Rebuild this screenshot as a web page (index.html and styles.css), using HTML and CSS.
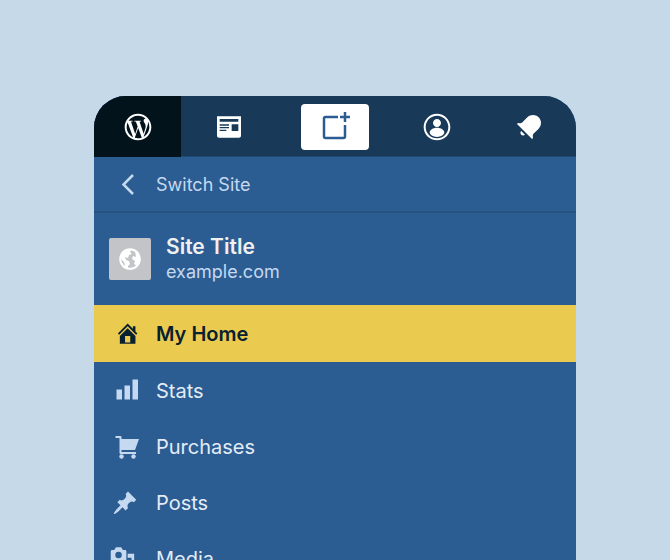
FILE: index.html
```html
<!DOCTYPE html>
<html lang="en">
<head>
<meta charset="utf-8">
<meta name="viewport" content="width=device-width, initial-scale=1">
<title>My Home</title>
<link rel="stylesheet" href="styles.css">
</head>
<body>
<div class="panel">
  <header class="topbar">
    <a class="tab tab-active" href="#sites" aria-label="My Sites"><svg class="icon-lg" viewBox="0 0 24 24"><path d="M12 2C6.477 2 2 6.477 2 12s4.477 10 10 10 10-4.477 10-10S17.523 2 12 2zM3.5 12c0-1.232.264-2.402.736-3.46L8.29 19.65C5.456 18.272 3.5 15.365 3.5 12zm8.5 8.5c-.834 0-1.64-.12-2.4-.345l2.55-7.41 2.613 7.157c.017.042.038.08.06.117-.884.31-1.833.48-2.823.48zm1.172-12.485c.512-.027.973-.08.973-.08.458-.055.404-.728-.054-.702 0 0-1.376.108-2.265.108-.835 0-2.24-.107-2.24-.107-.458-.026-.51.674-.053.7 0 0 .434.055.892.082l1.324 3.63-1.86 5.578-3.096-9.208c.512-.027.973-.08.973-.08.458-.055.403-.728-.055-.702 0 0-1.376.108-2.265.108-.16 0-.347-.003-.547-.01C6.418 5.025 9.03 3.5 12 3.5c2.213 0 4.228.846 5.74 2.232-.037-.002-.072-.007-.11-.007-.835 0-1.427.727-1.427 1.51 0 .7.404 1.292.835 1.993.323.566.7 1.293.7 2.344 0 .727-.28 1.572-.646 2.748l-.848 2.833-3.072-9.138zm3.1 11.332l2.597-7.506c.484-1.212.645-2.18.645-3.044 0-.313-.02-.603-.057-.874.664 1.21 1.042 2.6 1.042 4.078 0 3.136-1.7 5.874-4.227 7.347z"/></svg></a>
    <a class="tab" href="#reader" aria-label="Reader"><svg class="icon-lg" viewBox="0 0 24 24"><path d="M3 4v14.500c0 .8.7 1.500 1.500 1.500h15c.8 0 1.500-.7 1.500-1.500V4H3zm7 11H5v-1h5v1zm2-2H5v-1h7v1zm0-2H5v-1h7v1zm7 4h-5v-5h5v5zm0-7H5V6h14v2z"/></svg></a>
    <div class="tab"><button class="create" type="button" aria-label="Write"><svg class="icon-lg" viewBox="0 0 32 32"><path d="M19 6H6.500Q5 6 5 7.500V25.500Q5 27 6.500 27H24.500Q26 27 26 25.500V14" fill="none" stroke="currentColor" stroke-width="2.500"/><path d="M26 1V11M21 6H31" stroke="currentColor" stroke-width="2.500"/></svg></button></div>
    <a class="tab" href="#me" aria-label="My Profile"><svg class="icon-lg" viewBox="0 0 24 24"><path d="M12 2C6.477 2 2 6.477 2 12s4.477 10 10 10 10-4.477 10-10S17.523 2 12 2zm0 18.500c-4.694 0-8.500-3.806-8.500-8.500S7.306 3.500 12 3.500s8.500 3.806 8.500 8.500-3.806 8.500-8.500 8.500zm0-8c-3.038 0-5.500 1.728-5.500 3.500s2.462 3.500 5.500 3.500 5.500-1.728 5.500-3.500-2.462-3.500-5.500-3.500zm0-.5c1.660 0 3-1.340 3-3s-1.340-3-3-3-3 1.340-3 3 1.340 3 3 3z"/></svg></a>
    <a class="tab" href="#notifications" aria-label="Notifications"><svg class="icon-lg" viewBox="0 0 24 24"><path d="M6.140 14.970l2.828 2.827c-.362.362-.862.586-1.414.586-1.105 0-2-.895-2-2 0-.552.224-1.052.586-1.414zm8.867 5.324L14.300 21 3 9.700l.706-.707 1.102.157c.754.108 1.690-.122 2.077-.51l3.885-3.884c2.340-2.340 6.135-2.340 8.475 0s2.340 6.135 0 8.475l-3.885 3.886c-.388.388-.618 1.323-.51 2.077l.157 1.100z"/></svg></a>
  </header>
  <a class="switch" href="#switch"><svg class="icon" viewBox="0 0 26 26"><path d="M19 4L9.500 13.500l9.500 9.500" fill="none" stroke="currentColor" stroke-width="2.500"/></svg><span>Switch Site</span></a>
  <a class="site" href="#site">
    <span class="site-icon"><svg viewBox="0 0 22 22"><circle cx="11" cy="11" r="9.800" fill="none" stroke="currentColor" stroke-width="2"/><path d="M2 7L7 2l6-1-2 3 2 2-3 1-1 3-3-1 1 3 3 1 1 3-2 2v3l-3-2-1-5-3-3zM16 3l4 4 1 6-3 5-3-2 1-3-3-2 1-3 3 1z"/></svg></span>
    <span class="site-text"><strong class="site-title">Site Title</strong><span class="site-domain">example.com</span></span>
  </a>
  <nav class="menu">
    <a class="item item-current" href="#home" aria-current="page"><svg class="icon" viewBox="-0.500 0.500 20 20"><path d="M16 8.500l1.530 1.530-1.060 1.060L10 4.600l-6.470 6.490-1.060-1.060L10 2.500l4 4v-2h2v4zm-6-2.460l6 5.990V18H4v-5.970zM12 17v-5H8v5h4z"/></svg><span>My Home</span></a>
    <a class="item" href="#stats"><svg class="icon" viewBox="0 0 26 26"><path d="M2.500 11.500h5.500v10H2.500zM10.500 7.500h5.500v14h-5.500zM18.500 1.500h5.500v20h-5.500z"/></svg><span>Stats</span></a>
    <a class="item" href="#purchases"><svg class="icon" viewBox="0 0 26 26"><path d="M1.500 2h5q1 0 1 1v2h17.500l-4 11H7.500v2h14.500v2H6.500q-1 0-1-1V4h-4z"/><circle cx="7.500" cy="22.500" r="2.200"/><circle cx="19.500" cy="22.500" r="2.200"/></svg><span>Purchases</span></a>
    <a class="item" href="#posts"><svg class="icon" viewBox="1.500 0 20 20"><path d="M10.440 3.020l1.820-1.820 6.360 6.350-1.830 1.820c-1.050-.68-2.480-.57-3.410.36l-.75.75c-.92.93-1.040 2.350-.35 3.410l-1.830 1.820-2.410-2.410-2.800 2.790c-.42.42-3.380 2.710-3.800 2.290s1.860-3.390 2.280-3.810l2.790-2.790L4.100 9.360l1.830-1.820c1.050.69 2.480.57 3.400-.36l.75-.75c.93-.92 1.050-2.350.36-3.410z"/></svg><span>Posts</span></a>
    <a class="item" href="#media"><svg class="icon icon-wide" viewBox="3.500 0 20 20"><path fill-rule="evenodd" d="M13 11V4c0-.55-.45-1-1-1h-1.670L9 1H5L3.670 3H2c-.55 0-1 .45-1 1v7c0 .55.45 1 1 1h10c.55 0 1-.45 1-1zM7 4.500a2.500 2.500 0 1 1 0 5 2.500 2.500 0 1 1 0-5zM14 6h5v10.500a2.500 2.500 0 1 1-2-2.450V9h-3z"/></svg><span>Media</span></a>
  </nav>
</div>
</body>
</html>
```
FILE: styles.css
```css
* { box-sizing: border-box; }
html { height: 100%; }
body {
  margin: 0;
  height: 100%;
  padding: 96px 94px 0;
  overflow: hidden;
  background: #c5d9e9;
  font-family: Inter, "Liberation Sans", sans-serif;
  font-size: 20px;
}
a { color: inherit; text-decoration: none; }
svg { display: block; fill: currentColor; flex: none; overflow: visible; }
.panel {
  overflow: hidden;
  border-radius: 32px 32px 0 0;
  background: #2c5d92;
  color: #e3ecf6;
}
.topbar {
  display: grid;
  grid-template-columns: 87fr 96fr 115fr 90fr 94fr;
  height: 61px;
  background: #183958;
  box-shadow: inset 0 -1px #1f4a75;
  color: #fff;
}
.tab { display: flex; align-items: center; justify-content: center; }
.tab-active { background: #02131c; }
.icon-lg { width: 32px; height: 32px; }
.create {
  display: flex;
  align-items: center;
  justify-content: center;
  width: 68px;
  height: 46px;
  padding: 0;
  border: 0;
  border-radius: 4px;
  background: #fff;
  color: #2c5d92;
}
.icon { width: 26px; height: 26px; color: #c5d9f0; }
.switch {
  display: flex;
  align-items: center;
  gap: 16px;
  height: 56px;
  padding: 0 20px;
  border-bottom: 2px solid #265280;
  color: #c5d9f0;
  font-size: 18px;
}
.site {
  display: flex;
  align-items: center;
  gap: 15px;
  height: 92px;
  padding: 0 15px;
}
.site-icon {
  display: grid;
  place-items: center;
  width: 42px;
  height: 42px;
  border-radius: 2px;
  background: #c3c4c7;
  color: #fff;
}
.site-icon svg { width: 22px; height: 22px; }
.site-text { display: grid; line-height: 25px; }
.site-title { font-size: 21px; font-weight: 600; color: #f0f0f1; }
.site-domain { font-size: 18px; color: #c5d9f0; }
.item {
  display: flex;
  align-items: center;
  gap: 16px;
  height: 56px;
  padding: 0 20px;
}
.item-current {
  height: 57px;
  margin-bottom: 1px;
  background: #eacb50;
  color: #08202f;
  font-weight: 600;
}
.item-current .icon { color: inherit; }
```
